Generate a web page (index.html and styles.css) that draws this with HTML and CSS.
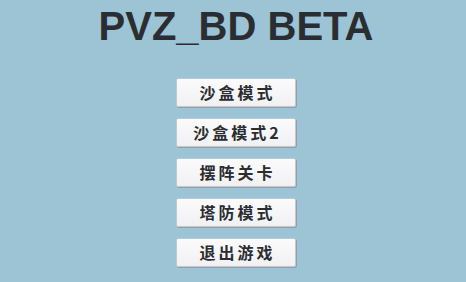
FILE: index.html
```html
<!DOCTYPE html>
<html>
<head>
<meta charset="utf-8">
<link rel="stylesheet" href="styles.css">
</head>
<body>
<div class="screen">
  <h1 class="title">PVZ_BD BETA</h1>
  <div class="menu">
    <button class="btn">沙盒模式</button>
    <button class="btn">沙盒模式2</button>
    <button class="btn">摆阵关卡</button>
    <button class="btn">塔防模式</button>
    <button class="btn">退出游戏</button>
  </div>
</div>
</body>
</html>
```
FILE: styles.css
```css
html, body {
  margin: 0;
  padding: 0;
  width: 466px;
  height: 282px;
  overflow: hidden;
  background: #9dc4d4;
}
.screen {
  display: flex;
  flex-direction: column;
  align-items: center;
  padding-left: 6px;
  padding-top: 3px;
}
.title {
  margin: 0;
  font-family: "Liberation Sans", Arial, sans-serif;
  font-weight: bold;
  font-size: 40px;
  line-height: 46px;
  color: #2a2e33;
}
.menu {
  margin-top: 29px;
  display: flex;
  flex-direction: column;
  gap: 11px;
}
.btn {
  width: 120px;
  height: 29px;
  margin: 0;
  padding: 0;
  background: linear-gradient(#fbfbfc, #f1f1f3);
  border: 1px solid #c3c8cc;
  border-radius: 2px;
  box-shadow: 1px 1px 0 rgba(90, 110, 125, 0.35);
  font-family: "Noto Sans CJK SC", "Liberation Sans", sans-serif;
  font-weight: bold;
  font-size: 16px;
  letter-spacing: 3px;
  text-indent: 3px;
  color: #2a2d31;
  line-height: 27px;
}
```
